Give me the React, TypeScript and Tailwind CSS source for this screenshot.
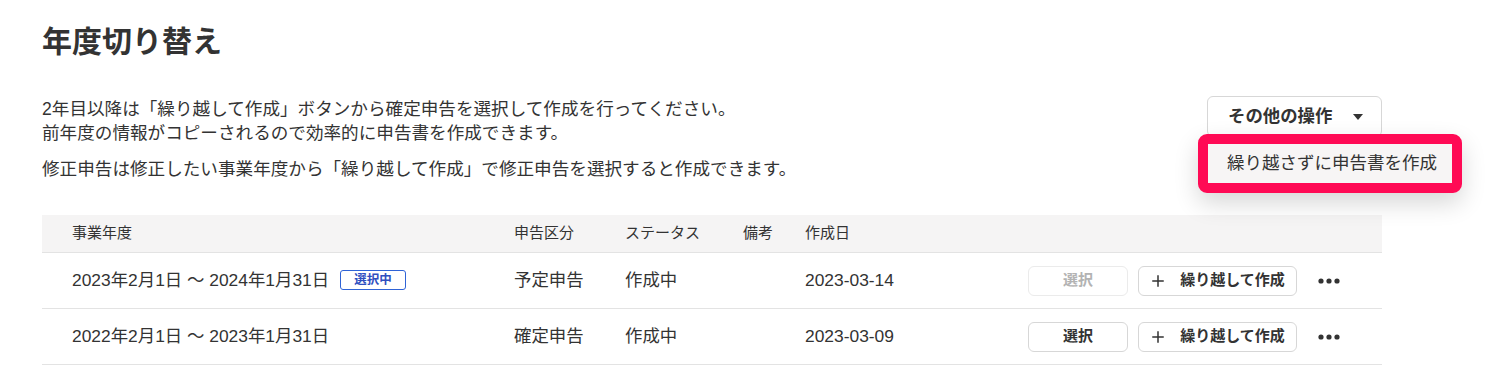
import { useState } from "react";

type Row = {
  period: string;
  current: boolean;
  kind: string;
  status: string;
  note: string;
  created: string;
};

const rows: Row[] = [
  {
    period: "2023年2月1日 〜 2024年1月31日",
    current: true,
    kind: "予定申告",
    status: "作成中",
    note: "",
    created: "2023-03-14",
  },
  {
    period: "2022年2月1日 〜 2023年1月31日",
    current: false,
    kind: "確定申告",
    status: "作成中",
    note: "",
    created: "2023-03-09",
  },
];

const PlusIcon = () => (
  <svg width="16" height="16" viewBox="0 0 16 16" className="shrink-0">
    <path d="M8 3v10M3 8h10" stroke="#333" strokeWidth="1.5" strokeLinecap="square" />
  </svg>
);

const DotsIcon = () => (
  <svg width="22" height="6" viewBox="0 0 22 6">
    <circle cx="3" cy="3" r="2.6" fill="#333" />
    <circle cx="11" cy="3" r="2.6" fill="#333" />
    <circle cx="19" cy="3" r="2.6" fill="#333" />
  </svg>
);

const App = () => {
  const [menuOpen, setMenuOpen] = useState(true);

  return (
    <div className="min-h-screen bg-white text-[#333] font-['Liberation_Sans','Noto_Sans_CJK_JP',sans-serif]">
      <div className="ml-[42px] w-[1340px] pt-[24px]">
        {/* Title */}
        <h1 className="text-[30px] font-bold leading-[36px]">年度切り替え</h1>

        {/* Description + other actions */}
        <div className="mt-[37px] flex items-start justify-between">
          <div className="text-[17.6px] leading-[24px]">
            <p>
              2年目以降は「繰り越して作成」ボタンから確定申告を選択して作成を行ってください。
              <br />
              前年度の情報がコピーされるので効率的に申告書を作成できます。
            </p>
            <p className="mt-[12px]">
              修正申告は修正したい事業年度から「繰り越して作成」で修正申告を選択すると作成できます。
            </p>
          </div>

          <div className="relative -mt-[1px]">
            <button
              onClick={() => setMenuOpen(!menuOpen)}
              className="flex h-[41px] w-[175px] items-center rounded-[6px] border border-[#d7d7d7] bg-white pl-[20px] pr-[18px] text-[17.4px] font-bold"
            >
              <span>その他の操作</span>
              <svg width="10" height="6" viewBox="0 0 10 6" className="ml-auto">
                <path d="M0 0h10L5 6z" fill="#333" />
              </svg>
            </button>

            {menuOpen && (
              <div className="absolute left-[-9px] top-[38px] z-10 w-[264px] rounded-[9px] border-[10px] border-[#ff0a55] bg-[#f7f5f5] shadow-[0_10px_24px_rgba(0,0,0,0.16)]">
                <div className="flex h-[39px] items-center pl-[19px] text-[17.5px]">
                  繰り越さずに申告書を作成
                </div>
              </div>
            )}
          </div>
        </div>

        {/* Table */}
        <div className="mt-[34px]">
          <div className="grid h-[38px] grid-cols-[472px_111px_118px_62px_1fr] items-center border-b border-[#e3e3e3] bg-[#f5f4f4] text-[15px]">
            <div className="pl-[30px]">事業年度</div>
            <div>申告区分</div>
            <div>ステータス</div>
            <div>備考</div>
            <div>作成日</div>
          </div>

          {rows.map((row) => (
            <div
              key={row.period}
              className="grid h-[56px] grid-cols-[472px_111px_118px_62px_1fr_auto] items-center border-b border-[#e3e3e3] text-[17.4px]"
            >
              <div className="flex items-center gap-[11px] pl-[30px]">
                <span>{row.period}</span>
                {row.current && (
                  <span className="rounded-[3px] border border-[#2f63d6] px-[13px] text-[12.5px] font-bold leading-[18px] text-[#2f4fbf]">
                    選択中
                  </span>
                )}
              </div>
              <div>{row.kind}</div>
              <div>{row.status}</div>
              <div>{row.note}</div>
              <div>{row.created}</div>
              <div className="flex items-center gap-[10px] pr-[31px]">
                <button
                  disabled={row.current}
                  className={
                    row.current
                      ? "h-[30px] w-[100px] rounded-[6px] border border-[#ebebeb] text-[15px] font-bold text-[#b3b3b3]"
                      : "h-[30px] w-[100px] rounded-[6px] border border-[#d7d7d7] text-[15px] font-bold"
                  }
                >
                  選択
                </button>
                <button className="flex h-[30px] w-[159px] items-center justify-center gap-[14px] rounded-[6px] border border-[#d7d7d7] text-[15px] font-bold">
                  <PlusIcon />
                  <span>繰り越して作成</span>
                </button>
                <button className="flex h-[30px] w-[44px] items-center justify-center">
                  <DotsIcon />
                </button>
              </div>
            </div>
          ))}
        </div>
      </div>
    </div>
  );
};

export default App;
